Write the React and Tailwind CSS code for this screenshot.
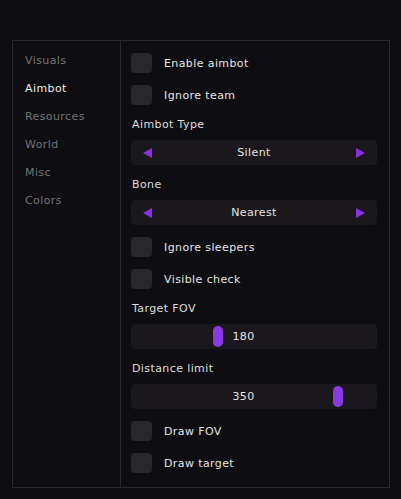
import React from "react";

const font = { fontFamily: '"DejaVu Sans", "Liberation Sans", sans-serif' };

function Checkbox({ label }) {
  return (
    <div className="flex items-center h-[20px] mt-[12px]">
      <div className="w-[21px] h-[20px] rounded-[4px] bg-[#29272c]" />
      <span className="ml-[12px] text-[11px] tracking-[0.4px] text-[#e4e4e4] leading-none">{label}</span>
    </div>
  );
}

function Label({ text }) {
  return (
    <div className="mt-[12px] h-[14px] flex items-center text-[11px] tracking-[0.4px] text-[#dedede] leading-none pl-[1px]">
      {text}
    </div>
  );
}

function Combo({ value }) {
  return (
    <div className="mt-[9px] h-[25px] rounded-[4px] bg-[#1a181c] flex items-center justify-between px-[12px]">
      <svg width="9" height="10" viewBox="0 0 9 10">
        <polygon points="9,0 9,10 0,5" fill="#8a2fe3" />
      </svg>
      <span className="text-[11px] tracking-[0.4px] text-[#e4e4e4] leading-none">{value}</span>
      <svg width="9" height="10" viewBox="0 0 9 10">
        <polygon points="0,0 0,10 9,5" fill="#8a2fe3" />
      </svg>
    </div>
  );
}

function Slider({ value, thumb }) {
  return (
    <div className="mt-[9px] h-[25px] rounded-[4px] bg-[#1a181c] relative flex items-center justify-center pr-[21px]">
      <div
        className="absolute top-[2px] w-[10px] h-[21px] rounded-[5px] bg-[#8a3ae2]"
        style={{ left: thumb }}
      />
      <span className="text-[11px] tracking-[0.4px] text-[#e4e4e4] leading-none">{value}</span>
    </div>
  );
}

export default function App() {
  const tabs = ["Visuals", "Aimbot", "Resources", "World", "Misc", "Colors"];
  return (
    <div className="w-[401px] h-[499px] bg-[#0e0d11] pt-[40px] pl-[12px]" style={font}>
      <div className="w-[378px] h-[448px] border border-[#29282d] flex">
        <div className="w-[108px] border-r border-[#29282d] pt-[5px] pl-[12px] flex flex-col">
          {tabs.map((t) => (
            <div
              key={t}
              className={
                "h-[28px] flex items-center text-[11px] tracking-[0.4px] leading-none " +
                (t === "Aimbot" ? "text-[#ececec]" : "text-[#747377]")
              }
            >
              {t}
            </div>
          ))}
        </div>
        <div className="flex-1 flex flex-col pl-[10px] pr-[12px]">
          <Checkbox label="Enable aimbot" />
          <Checkbox label="Ignore team" />
          <Label text="Aimbot Type" />
          <Combo value="Silent" />
          <Label text="Bone" />
          <Combo value="Nearest" />
          <Checkbox label="Ignore sleepers" />
          <Checkbox label="Visible check" />
          <Label text="Target FOV" />
          <Slider value="180" thumb={82} />
          <Label text="Distance limit" />
          <Slider value="350" thumb={202} />
          <Checkbox label="Draw FOV" />
          <Checkbox label="Draw target" />
        </div>
      </div>
    </div>
  );
}
